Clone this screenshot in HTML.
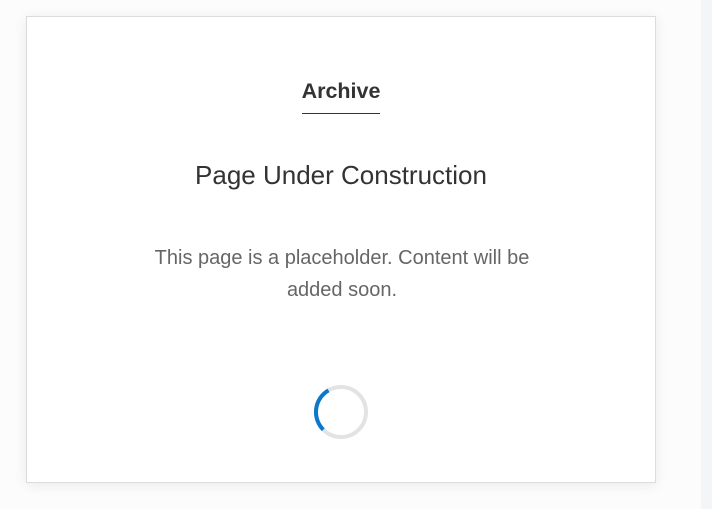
<!DOCTYPE html>
<html><head><style>
html,body{margin:0;padding:0;width:712px;height:509px;background:#fcfcfc;overflow:hidden;font-family:"Liberation Sans",sans-serif}
.strip{position:absolute;left:701px;top:0;width:11px;height:509px;background:#f4f5f6}
.card{position:absolute;left:26px;top:16px;width:628px;height:465px;background:#fff;border:1px solid #dcdcdc;box-shadow:0 2px 12px rgba(0,0,0,0.08)}
.arch{position:absolute;left:0;width:100%;top:62px;text-align:center}
.arch span{font-weight:bold;font-size:21.5px;color:#333;display:inline-block;padding-bottom:9px;border-bottom:1px solid #333}
h1{position:absolute;margin:0;left:0;width:100%;top:143px;text-align:center;font-weight:normal;font-size:26px;color:#333}
p{position:absolute;margin:0;left:100px;width:430px;top:225px;text-align:center;font-size:20px;line-height:32px;color:#666}
svg{position:absolute;left:286px;top:367px}
</style></head><body>
<div class="strip"></div>
<div class="card">
<div class="arch"><span>Archive</span></div>
<h1>Page Under Construction</h1>
<p>This page is a placeholder. Content will be added soon.</p>
<svg width="56" height="56" viewBox="0 0 56 56">
<circle cx="28" cy="28" r="25" fill="none" stroke="#e3e3e3" stroke-width="4"/>
<path d="M 15.5 6.35 A 25 25 0 0 0 10.3 45.7" fill="none" stroke="#0a78cc" stroke-width="4"/>
</svg>
</div>
</body></html>
